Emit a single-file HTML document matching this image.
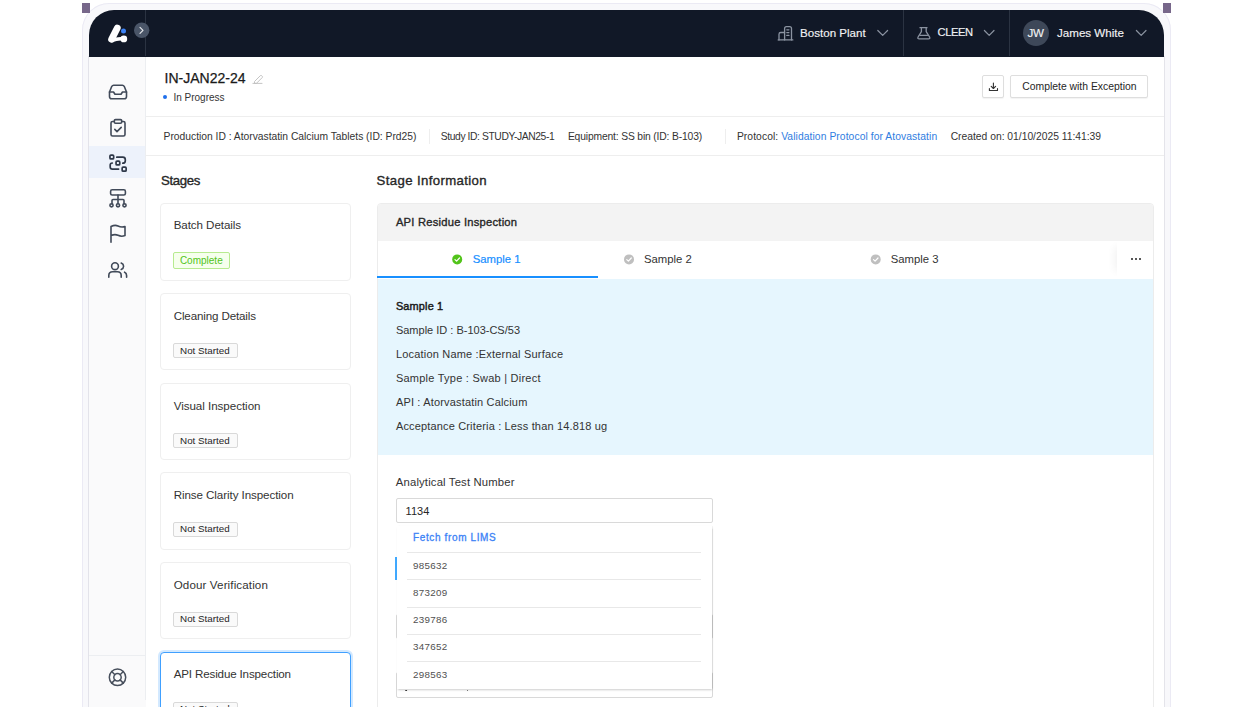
<!DOCTYPE html>
<html><head><meta charset="utf-8">
<style>
*{box-sizing:border-box;margin:0;padding:0}
html,body{width:1254px;height:707px;overflow:hidden;background:#fff;font-family:"Liberation Sans",sans-serif;color:#262626}
.a{position:absolute}
.t{position:absolute;white-space:nowrap;line-height:1}
svg{position:absolute;overflow:visible}
.ic{fill:none;stroke:#414a59;stroke-width:1.6;stroke-linecap:round;stroke-linejoin:round}
.hic{fill:none;stroke:#8b93a1;stroke-width:1.2;stroke-linecap:round;stroke-linejoin:round}
.card{position:absolute;left:160.3px;width:191px;border:1.2px solid #efefef;border-radius:4px;background:#fff}
.badge{position:absolute;left:173.2px;height:14.8px;border:1px solid #d9d9d9;background:#fafafa;border-radius:2px}
.dv{position:absolute;left:407px;width:294px;height:1px;background:#e8e8e8}
</style></head><body>
<div class="a" style="left:82px;top:3px;width:1089px;height:720px;background:#f8f8fb;border-radius:27px 27px 0 0;box-shadow:inset 0 0 0 1px #ebeaf4"></div>
<div class="a" style="left:82px;top:3px;width:8px;height:10px;background:#77678a"></div>
<div class="a" style="left:1163px;top:3px;width:8px;height:10px;background:#77678a"></div>
<div class="a" style="left:89px;top:10px;width:1075px;height:720px;background:#fff;border-radius:25px 25px 0 0"></div>
<div class="a" style="left:89px;top:10px;width:1075px;height:46.6px;background:#111827;border-radius:25px 25px 0 0"></div>
<div class="a" style="left:144.5px;top:10px;width:1px;height:46px;background:#2b3342"></div>
<div class="a" style="left:903.0px;top:10px;width:1px;height:46px;background:#2b3342"></div>
<div class="a" style="left:1009.3px;top:10px;width:1px;height:46px;background:#2b3342"></div>
<svg style="left:0;top:0" width="1" height="1">
  <path d="M117.3 28 L111.6 39.3" stroke="#fff" stroke-width="6.8" stroke-linecap="round" fill="none"/>
  <path d="M112.2 40.4 Q117.5 38.2 123.4 38.9" stroke="#fff" stroke-width="3.6" stroke-linecap="round" fill="none"/>
  <circle cx="123.8" cy="38.9" r="3.4" fill="#fff"/>
  <circle cx="123.5" cy="30.9" r="2.5" fill="#3b82f6"/>
  <circle cx="141.7" cy="30.3" r="7.7" fill="#4a5568"/>
  <path d="M140 27.3 L143 30.3 L140 33.3" stroke="#e5e7eb" stroke-width="1.2" fill="none" stroke-linecap="round" stroke-linejoin="round"/>
  <g class="hic" style="stroke-width:1.3">
    <path d="M778.2 39.9 H792.8"/>
    <path d="M779 39.9 V34.3 Q779 32.5 780.8 32.5 H784.6"/>
    <path d="M784.6 39.9 V28.6 Q784.6 26.7 786.5 26.7 H789.6 Q791.5 26.7 791.5 28.6 V39.9"/>
    <path d="M786.8 29.8 H788.9 M786.8 32.6 H788.9 M786.8 35.4 H788.9"/>
  </g>
  <path class="hic" d="M877.8 30.5 L882.7 35.4 L887.6 30.5"/>
  <g class="hic" style="stroke-width:1.3">
    <path d="M920 27.7 H927 M921.4 27.7 V31.6 L918.1 37 Q917.2 38.9 919.3 38.9 H928.4 Q930.5 38.9 929.6 37 L926.2 31.6 V27.7"/>
    <path d="M919.9 35.3 H927.5"/>
  </g>
  <path class="hic" d="M984.4 30.5 L989.2 35.4 L994 30.5"/>
  <path class="hic" d="M1136.4 30.5 L1141.2 35.4 L1146 30.5"/>
</svg>
<div class="t" style="left:800px;top:26.68px;font-size:11.6px;color:#f1f2f4;-webkit-text-stroke:0.15px currentColor">Boston Plant</div>
<div class="t" style="left:937.5px;top:27.02px;font-size:11.2px;color:#f1f2f4;-webkit-text-stroke:0.15px currentColor;letter-spacing:-0.45px">CLEEN</div>
<div class="a" style="left:1023px;top:19.8px;width:26px;height:26px;border-radius:50%;background:#3e4859"></div>
<div class="t" style="left:1027.5px;top:26.68px;font-size:11.6px;color:#f1f2f4;-webkit-text-stroke:0.15px currentColor;letter-spacing:-0.3px">JW</div>
<div class="t" style="left:1057px;top:26.68px;font-size:11.6px;color:#f1f2f4;-webkit-text-stroke:0.15px currentColor">James White</div>
<div class="a" style="left:89px;top:56.6px;width:57px;height:660px;background:#fafafb"></div>
<div class="a" style="left:88px;top:56px;width:1px;height:660px;background:#e3e3ea"></div>
<div class="a" style="left:89px;top:146.2px;width:56px;height:32px;background:#edf2fb"></div>
<div class="a" style="left:145px;top:56.6px;width:1px;height:643px;background:#eceef1"></div>
<div class="a" style="left:89px;top:655px;width:56px;height:1px;background:#eceef1"></div>
<svg style="left:0;top:0" width="1" height="1">
  <g class="ic">
    <path d="M109.5 92 L111.8 86.3 Q112.4 85.2 113.6 85.2 H122.4 Q123.6 85.2 124.2 86.3 L126.5 92 V96.5 Q126.5 98.8 124.2 98.8 H111.8 Q109.5 98.8 109.5 96.5 Z"/>
    <path d="M109.5 92 H113.5 L115 94.3 H121 L122.5 92 H126.5"/>
    <path d="M114.3 121.5 H112.6 Q111 121.5 111 123.1 V134.4 Q111 136 112.6 136 H123.4 Q125 136 125 134.4 V123.1 Q125 121.5 123.4 121.5 H121.7"/>
    <rect x="114.3" y="119.6" width="7.4" height="3.6" rx="1.2"/>
    <path d="M114.8 129.4 L117 131.6 L121.2 127.4"/>
    <g style="stroke:#2e3849;stroke-width:1.7">
    <rect x="109.95" y="155.05" width="3.7" height="3.9" rx="1"/>
    <rect x="116.05" y="161.2" width="3.7" height="3.7" rx="1"/>
    <rect x="122.15" y="167.2" width="4" height="4" rx="1"/>
    <path d="M116.8 157.2 H122.8 Q125.3 157.2 125.3 159.7 V160.7 Q125.3 163.2 122.8 163.2"/>
    <path d="M112.3 163 Q110.2 163 110.2 165.1 V166.9 Q110.2 169.1 112.4 169.1 H118.6"/>
    </g>
    <rect x="110.6" y="189.8" width="14.8" height="5.2" rx="1.6"/>
    <path d="M118 195 V203.5 M112 204 V200.5 Q112 199.5 113 199.5 H123 Q124 199.5 124 200.5 V204"/>
    <circle cx="111.5" cy="205.3" r="1.6"/>
    <circle cx="118" cy="205.3" r="1.6"/>
    <circle cx="124.5" cy="205.3" r="1.6"/>
    <path d="M111 242.2 V226.5 Q115 224.5 118 226 Q121.5 227.8 125 226.5 V235.5 Q121.5 237 118 235.3 Q115 233.8 111 235.5"/>
    <circle cx="115" cy="266.2" r="3.4"/>
    <path d="M108.8 277.2 V275.6 Q108.8 271.8 112.6 271.8 H117.4 Q121.2 271.8 121.2 275.6 V277.2"/>
    <path d="M121.2 263 Q123.6 264 123.6 266.2 Q123.6 268.4 121.2 269.4"/>
    <path d="M124.6 272.2 Q126.6 273 126.6 275.6 V277.2"/>
    <g style="stroke:#474f5c;stroke-width:1.5"><circle cx="117.5" cy="677.3" r="8.2"/>
    <circle cx="117.5" cy="677.3" r="3.7"/>
    <path d="M111.7 671.5 L114.9 674.7 M123.3 671.5 L120.1 674.7 M111.7 683.1 L114.9 679.9 M123.3 683.1 L120.1 679.9"/></g>
  </g>
</svg>
<div class="t" style="left:164.6px;top:70.85px;font-size:14px;color:#1a1a1a;-webkit-text-stroke:0.25px currentColor">IN-JAN22-24</div>
<svg style="left:0;top:0" width="1" height="1">
  <path d="M252.5 83.4 H262.4 M254.5 81.5 L260.3 75.7 Q261 75 261.7 75.7 L262.2 76.2 Q262.9 76.9 262.2 77.6 L256.4 83.4 H254.5 Z" fill="none" stroke="#bdbdbd" stroke-width="0.9" stroke-linejoin="round"/>
</svg>
<div class="a" style="left:163px;top:95.1px;width:4.4px;height:4.4px;border-radius:50%;background:#1f6feb"></div>
<div class="t" style="left:173.4px;top:92.53px;font-size:10px;color:#333">In Progress</div>
<div class="a" style="left:982.1px;top:75.1px;width:22.4px;height:23.1px;border:1px solid #dedede;border-radius:2px;background:#fff;box-shadow:0 1px 1px rgba(0,0,0,0.05)"></div>
<svg style="left:0;top:0" width="1" height="1">
  <path d="M993.4 83 V88.4 M991.2 86.3 L993.4 88.5 L995.6 86.3 M989.4 88.6 V90.5 H997.5 V88.6" fill="none" stroke="#333" stroke-width="1.1" stroke-linecap="round" stroke-linejoin="round"/>
</svg>
<div class="a" style="left:1010.1px;top:75.1px;width:138.3px;height:23.1px;border:1px solid #dedede;border-radius:2px;background:#fff;box-shadow:0 1px 1px rgba(0,0,0,0.05)"></div>
<div class="t" style="left:1022.2px;top:82.20px;font-size:10.4px;color:#262626">Complete with Exception</div>
<div class="a" style="left:146px;top:116px;width:1018px;height:1px;background:#eeeeee"></div>
<div class="t" style="left:163.6px;top:132.28px;font-size:10.3px;color:#333;letter-spacing:-0.01px">Production ID : Atorvastatin Calcium Tablets (ID: Prd25)</div>
<div class="a" style="left:429px;top:128.8px;width:1px;height:15px;background:#eeeeee"></div>
<div class="t" style="left:440.8px;top:132.28px;font-size:10.3px;color:#333;letter-spacing:-0.4px">Study ID: STUDY-JAN25-1</div>
<div class="t" style="left:567.9px;top:132.28px;font-size:10.3px;color:#333;letter-spacing:-0.15px">Equipment: SS bin (ID: B-103)</div>
<div class="a" style="left:724.5px;top:128.8px;width:1px;height:15px;background:#eeeeee"></div>
<div class="t" style="left:736.9px;top:132.28px;font-size:10.3px;color:#333;letter-spacing:0.08px">Protocol: <span style="color:#2f7de1">Validation Protocol for Atovastatin</span></div>
<div class="t" style="left:950.7px;top:132.28px;font-size:10.3px;color:#333">Created on: 01/10/2025 11:41:39</div>
<div class="a" style="left:146px;top:155px;width:1018px;height:1px;background:#eeeeee"></div>
<div class="t" style="left:161px;top:173.83px;font-size:13.2px;-webkit-text-stroke:0.35px currentColor;color:#262626;letter-spacing:-0.36px">Stages</div>
<div class="card" style="top:202.6px;height:78.8px"></div>
<div class="t" style="left:173.7px;top:218.58px;font-size:11.6px;color:#333;letter-spacing:-0.075px">Batch Details</div>
<div class="badge" style="top:252.1px;width:56.7px;height:16.6px;border-color:#b7eb8f;background:#f6ffed"></div>
<div class="t" style="left:179.9px;top:255.93px;font-size:10px;color:#52c41a">Complete</div>
<div class="card" style="top:293.4px;height:77.0px"></div>
<div class="t" style="left:173.7px;top:309.98px;font-size:11.6px;color:#333;letter-spacing:-0.14px">Cleaning Details</div>
<div class="badge" style="top:343.3px;width:64.4px"></div>
<div class="t" style="left:180.1px;top:345.50px;font-size:9.8px;color:#262626">Not Started</div>
<div class="card" style="top:383.4px;height:77.1px"></div>
<div class="t" style="left:173.7px;top:399.98px;font-size:11.6px;color:#333;letter-spacing:-0.04px">Visual Inspection</div>
<div class="badge" style="top:433.3px;width:64.4px"></div>
<div class="t" style="left:180.1px;top:435.50px;font-size:9.8px;color:#262626">Not Started</div>
<div class="card" style="top:472.29999999999995px;height:77.5px"></div>
<div class="t" style="left:173.7px;top:488.88px;font-size:11.6px;color:#333;letter-spacing:-0.08px">Rinse Clarity Inspection</div>
<div class="badge" style="top:522.1999999999999px;width:64.4px"></div>
<div class="t" style="left:180.1px;top:524.40px;font-size:9.8px;color:#262626">Not Started</div>
<div class="card" style="top:562.3px;height:76.8px"></div>
<div class="t" style="left:173.7px;top:578.88px;font-size:11.6px;color:#333;letter-spacing:0.12px">Odour Verification</div>
<div class="badge" style="top:612.1999999999999px;width:64.4px"></div>
<div class="t" style="left:180.1px;top:614.40px;font-size:9.8px;color:#262626">Not Started</div>
<div class="card" style="top:651.55px;height:80px;border:1.5px solid #40a0ff;box-shadow:0 0 0 2px #d3e9ff"></div>
<div class="t" style="left:173.7px;top:668.28px;font-size:11.6px;color:#333;letter-spacing:-0.15px">API Residue Inspection</div>
<div class="badge" style="top:701.5999999999999px;width:64.4px"></div>
<div class="t" style="left:180.1px;top:703.80px;font-size:9.8px;color:#262626">Not Started</div>
<div class="t" style="left:376.6px;top:173.83px;font-size:13.2px;-webkit-text-stroke:0.35px currentColor;color:#262626;letter-spacing:0.37px">Stage Information</div>
<div class="a" style="left:376.8px;top:202.8px;width:777px;height:520px;border:1.2px solid #ececec;border-radius:4px;background:#fff"></div>
<div class="a" style="left:378px;top:204px;width:774.6px;height:36.7px;background:#f3f3f3;border-radius:3px 3px 0 0"></div>
<div class="t" style="left:395.9px;top:216.52px;font-size:11.2px;-webkit-text-stroke:0.35px currentColor;color:#262626;letter-spacing:0.23px">API Residue Inspection</div>
<div class="a" style="left:377px;top:275.7px;width:220.6px;height:2px;background:#1890ff"></div>
<svg style="left:0;top:0" width="1" height="1">
  <circle cx="457.2" cy="259.4" r="5" fill="#52c41a"/>
  <path d="M455 259.6 L456.6 261.1 L459.5 258" stroke="#fff" stroke-width="1.2" fill="none" stroke-linecap="round" stroke-linejoin="round"/>
  <circle cx="629" cy="259.4" r="5" fill="#bfbfbf"/>
  <path d="M626.8 259.6 L628.4 261.1 L631.3 258" stroke="#fff" stroke-width="1.2" fill="none" stroke-linecap="round" stroke-linejoin="round"/>
  <circle cx="875.7" cy="259.4" r="5" fill="#bfbfbf"/>
  <path d="M873.5 259.6 L875.1 261.1 L878 258" stroke="#fff" stroke-width="1.2" fill="none" stroke-linecap="round" stroke-linejoin="round"/>
</svg>
<div class="t" style="left:472.7px;top:254.13px;font-size:11.3px;color:#1890ff;-webkit-text-stroke:0.2px currentColor">Sample 1</div>
<div class="t" style="left:644px;top:254.13px;font-size:11.3px;color:#333">Sample 2</div>
<div class="t" style="left:890.8px;top:254.13px;font-size:11.3px;color:#333">Sample 3</div>
<div class="a" style="left:1117px;top:241px;width:36px;height:36px;background:#fff;box-shadow:-8px 0 8px -6px rgba(0,0,0,0.06)"></div>
<div class="a" style="left:1131px;top:258px;width:2px;height:2px;background:#3a3a3a;opacity:0.85"></div>
<div class="a" style="left:1135px;top:258px;width:2px;height:2px;background:#3a3a3a;opacity:0.85"></div>
<div class="a" style="left:1139px;top:258px;width:2px;height:2px;background:#3a3a3a;opacity:0.85"></div>
<div class="a" style="left:377.6px;top:278.7px;width:775px;height:176px;background:#e6f6fe"></div>
<div class="t" style="left:395.9px;top:300.77px;font-size:10.9px;-webkit-text-stroke:0.45px currentColor;color:#1a1a1a;letter-spacing:0.18px">Sample 1</div>
<div class="t" style="left:395.9px;top:325.09px;font-size:11px;color:#333;letter-spacing:0px">Sample ID : B-103-CS/53</div>
<div class="t" style="left:395.9px;top:349.19px;font-size:11px;color:#333;letter-spacing:0.19px">Location Name :External Surface</div>
<div class="t" style="left:395.9px;top:373.29px;font-size:11px;color:#333;letter-spacing:0.24px">Sample Type : Swab | Direct</div>
<div class="t" style="left:395.9px;top:397.39px;font-size:11px;color:#333;letter-spacing:0.17px">API : Atorvastatin Calcium</div>
<div class="t" style="left:395.9px;top:421.49px;font-size:11px;color:#333;letter-spacing:0.16px">Acceptance Criteria : Less than 14.818 ug</div>
<div class="t" style="left:395.8px;top:477.43px;font-size:11.3px;color:#333;letter-spacing:0.16px">Analytical Test Number</div>
<div class="a" style="left:395.6px;top:498.3px;width:317.4px;height:25.2px;border:1px solid #d9d9d9;border-radius:2px;background:#fff"></div>
<div class="t" style="left:405.6px;top:505.59px;font-size:11px;color:#262626">1134</div>
<div class="a" style="left:395.4px;top:556.7px;width:1.5px;height:23.6px;background:#40a9ff"></div>
<div class="a" style="left:395.6px;top:613.8px;width:317.2px;height:25px;border:1px solid #d9d9d9;border-radius:2px;background:#fff"></div>
<div class="a" style="left:395.6px;top:672px;width:317.2px;height:25.8px;border:1px solid #d9d9d9;border-radius:2px;background:#fff"></div>
<div class="a" style="left:396.6px;top:525.6px;width:315.6px;height:163.8px;background:#fff;box-shadow:0 1.5px 2px -0.5px rgba(0,0,0,0.2), 0.5px 0 1px rgba(0,0,0,0.08)"></div>
<div class="t" style="left:413px;top:532.53px;font-size:10px;-webkit-text-stroke:0.3px currentColor;color:#3b82f6;letter-spacing:0.63px">Fetch from LIMS</div>
<div class="dv" style="top:552.0px"></div>
<div class="t" style="left:413px;top:560.50px;font-size:9.8px;color:#505050;letter-spacing:0.3px">985632</div>
<div class="dv" style="top:579.2px"></div>
<div class="t" style="left:413px;top:587.70px;font-size:9.8px;color:#505050;letter-spacing:0.3px">873209</div>
<div class="dv" style="top:606.6px"></div>
<div class="t" style="left:413px;top:615.10px;font-size:9.8px;color:#505050;letter-spacing:0.3px">239786</div>
<div class="dv" style="top:633.8px"></div>
<div class="t" style="left:413px;top:642.30px;font-size:9.8px;color:#505050;letter-spacing:0.3px">347652</div>
<div class="dv" style="top:661.1px"></div>
<div class="t" style="left:413px;top:669.60px;font-size:9.8px;color:#505050;letter-spacing:0.3px">298563</div>
<div class="a" style="left:405px;top:689.5px;width:1.6px;height:1.4px;background:#333;border-radius:1px;transform:skewX(-30deg)"></div>
<div class="a" style="left:466.6px;top:689.5px;width:1.3px;height:1.3px;background:#777"></div>
<div class="a" style="left:1164px;top:56px;width:1px;height:660px;background:#e4e4ea"></div>
</body></html>
